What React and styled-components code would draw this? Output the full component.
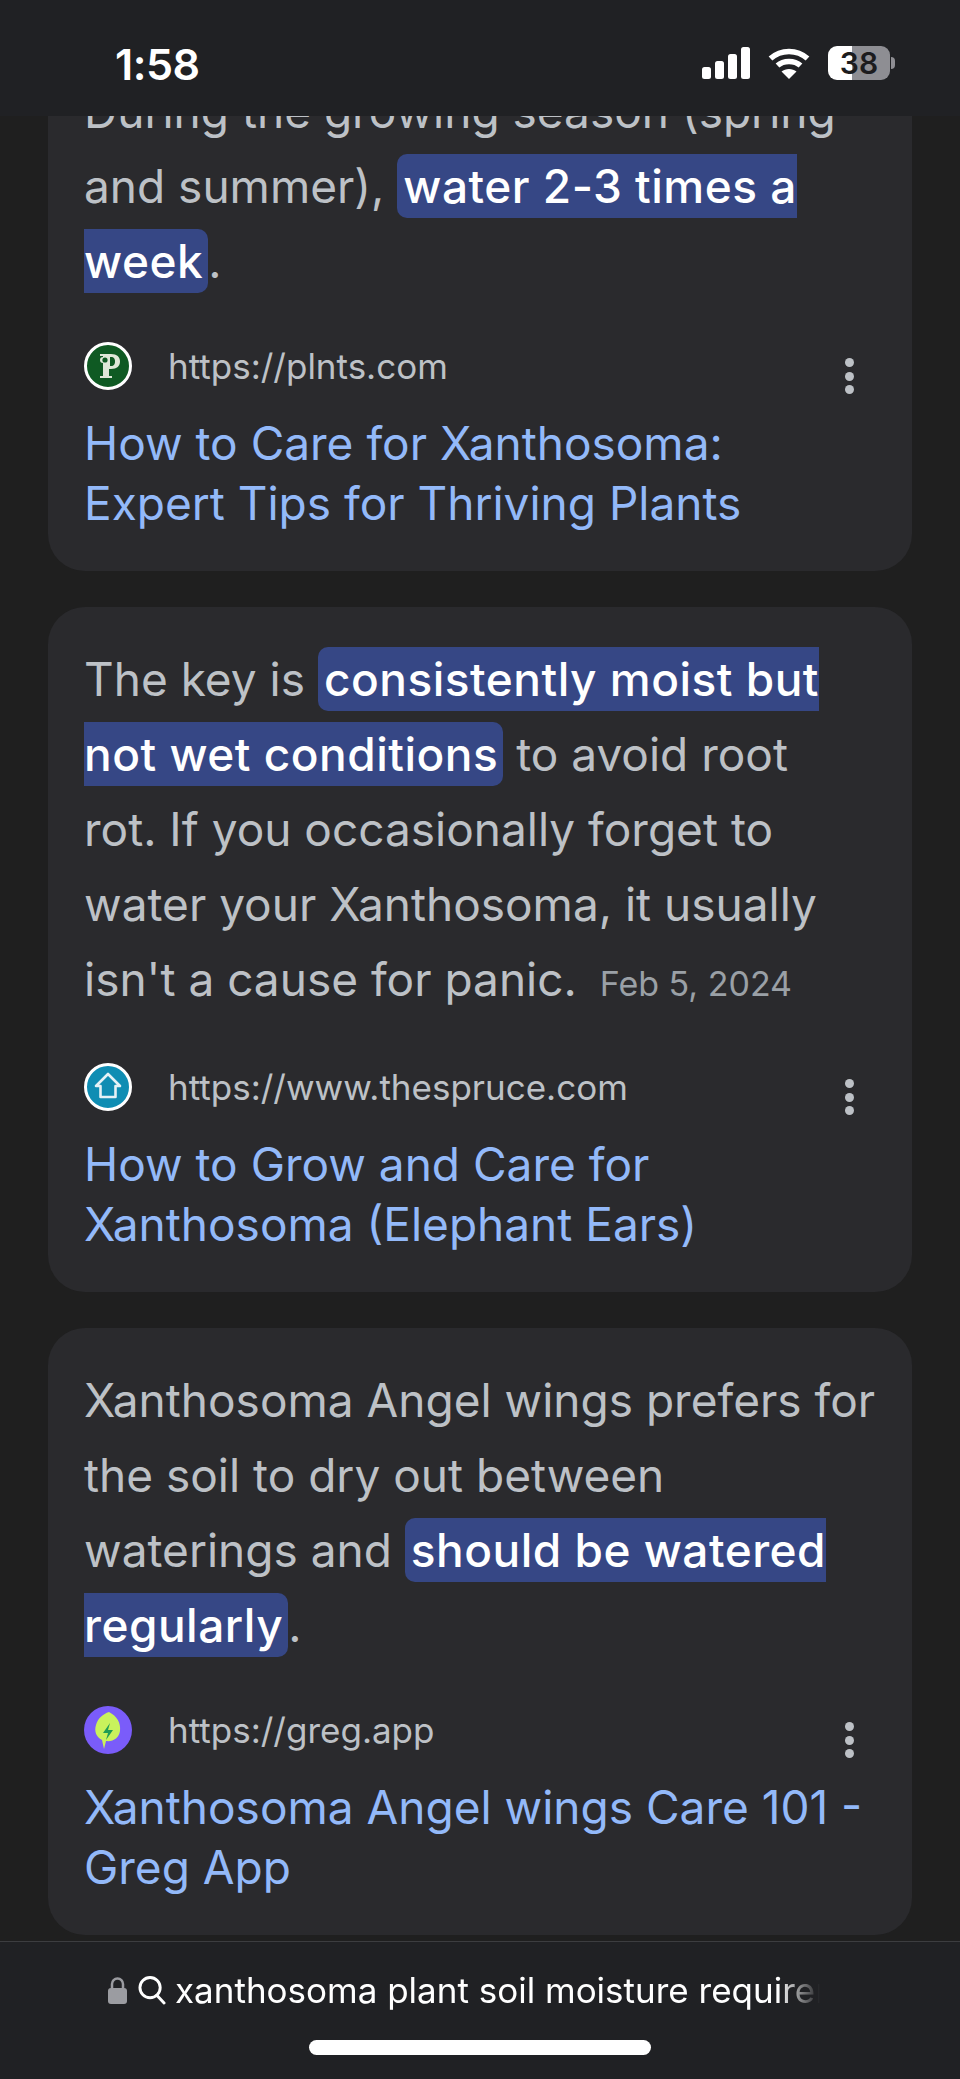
import React from "react";
import styled, { createGlobalStyle } from "styled-components";

const GlobalStyle = createGlobalStyle`
  html, body {
    margin: 0;
    padding: 0;
    background: #1f1f1f;
  }
`;

const Screen = styled.div`
  width: 960px;
  height: 2079px;
  display: flex;
  flex-direction: column;
  overflow: hidden;
  background: #1f1f1f;
  font-family: Inter, "Liberation Sans", sans-serif;
`;

const StatusBar = styled.div`
  height: 116px;
  flex-shrink: 0;
  background: #202124;
  display: flex;
  justify-content: space-between;
  align-items: flex-start;
  padding: 46px 65px 0 115px;
  box-sizing: border-box;
`;

const Time = styled.div`
  color: #fff;
  font-size: 43px;
  font-weight: 600;
  line-height: 36px;
  letter-spacing: -0.5px;
`;

const StatusIcons = styled.div`
  display: flex;
  align-items: center;
  gap: 18px;
`;

const Battery = styled.div`
  position: relative;
  width: 62px;
  height: 34px;
  margin-right: 5px;
  border-radius: 9px;
  background: linear-gradient(90deg, #fff 0 24px, #8e8e93 24px);
  color: #1c1c1e;
  font-size: 30px;
  font-weight: 600;
  line-height: 34px;
  text-align: center;
  &::after {
    content: "";
    position: absolute;
    right: -5px;
    top: 11px;
    width: 4px;
    height: 12px;
    border-radius: 0 4px 4px 0;
    background: #8e8e93;
  }
`;

const Feed = styled.div`
  flex: 1;
  min-height: 0;
  overflow: hidden;
  display: flex;
  flex-direction: column;
  justify-content: flex-end;
  gap: 36px;
  padding: 0 48px 6px;
`;

const Card = styled.div`
  flex-shrink: 0;
  background: #2a2a2d;
  border-radius: 37px;
  padding: 35px 36px 38px;
`;

const Snippet = styled.div`
  color: #bdc1c6;
  font-size: 46px;
  line-height: 75px;
  white-space: nowrap;
`;

const Mark = styled.span`
  background: #364785;
  color: #fff;
  font-weight: 500;
  letter-spacing: 0.5px;
  padding: 4px 5px 4px 6px;
  border-radius: 10px;
`;

const DateText = styled.span`
  color: #9aa0a6;
  font-size: 34px;
  line-height: 73px;
  margin-left: 10px;
`;

const Source = styled.div`
  display: flex;
  align-items: center;
  margin-top: 43px;
  height: 48px;
`;

const Favicon = styled.div`
  width: 48px;
  height: 48px;
  flex-shrink: 0;
  margin-right: 36px;
  svg {
    display: block;
  }
`;

const Url = styled.div`
  flex: 1;
  color: #bdc1c6;
  font-size: 35px;
`;

const Dots = styled.div`
  display: flex;
  flex-direction: column;
  gap: 4.5px;
  margin: 20px 22px 0 0;
  i {
    display: block;
    width: 9px;
    height: 9px;
    border-radius: 50%;
    background: #bdc1c6;
  }
`;

const Title = styled.div`
  margin-top: 23px;
  color: #93b9f9;
  font-size: 46px;
  line-height: 60px;
  white-space: nowrap;
`;

const BottomBar = styled.div`
  height: 138px;
  flex-shrink: 0;
  box-sizing: border-box;
  background: #202124;
  border-top: 1px solid #3c3d40;
  display: flex;
  flex-direction: column;
  align-items: flex-start;
`;

const Address = styled.div`
  width: 712px;
  height: 62px;
  margin: 17px 0 0 108px;
  display: flex;
  align-items: center;
  gap: 11px;
  color: #fff;
  font-size: 35px;
  white-space: nowrap;
  overflow: hidden;
  mask-image: linear-gradient(90deg, #000 670px, transparent 712px);
  svg {
    flex-shrink: 0;
  }
`;

const Query = styled.span`
  margin-left: -2px;
`;

const HomeBar = styled.div`
  width: 342px;
  height: 15px;
  margin: 19px 0 0 309px;
  border-radius: 8px;
  background: #fff;
`;

const SignalIcon = () => (
  <svg width="48" height="32" viewBox="0 0 48 32" fill="#fff">
    <rect x="0" y="20" width="9" height="12" rx="2.5" />
    <rect x="13" y="14" width="9" height="18" rx="2.5" />
    <rect x="26" y="7" width="9" height="25" rx="2.5" />
    <rect x="39" y="0" width="9" height="32" rx="2.5" />
  </svg>
);

const WifiIcon = () => (
  <svg width="42" height="32" viewBox="0 0 42 32" fill="none" stroke="#fff" strokeWidth="5.5">
    <path d="M2.5 11.5C13 2 29 2 39.5 11.5" />
    <path d="M9.5 18.5C15.5 13 26.5 13 32.5 18.5" />
    <path d="M21 32 13.5 24.5C17.5 21 24.5 21 28.5 24.5Z" fill="#fff" stroke="none" />
  </svg>
);

const PlntsIcon = () => (
  <svg width="48" height="48" viewBox="0 0 48 48">
    <circle cx="24" cy="24" r="22.5" fill="#0f5a23" stroke="#fff" strokeWidth="3" />
    <path d="M16 12h11c6 0 9 3 9 7.5S33 27 27 27h-2v7h3v2H16v-2h3V21c-2 0-3-1-3-3s1-3 3-3v-1h-3Z" fill="#dfe8d8" />
    <circle cx="21" cy="18" r="2.6" fill="#0f5a23" />
    <path d="M26 15h1c3 0 4 2 4 4.500s-1 4.500-4 4.500h-1Z" fill="#0f5a23" />
  </svg>
);

const SpruceIcon = () => (
  <svg width="48" height="48" viewBox="0 0 48 48">
    <circle cx="24" cy="24" r="22.500" fill="#0f8db3" stroke="#fff" strokeWidth="3" />
    <path d="M24 11 36 23h-4.500v11h-15V23H12Z" fill="#0f8db3" stroke="#e4f2f6" strokeWidth="2.600" strokeLinejoin="round" />
  </svg>
);

const GregIcon = () => (
  <svg width="48" height="48" viewBox="0 0 48 48">
    <circle cx="24" cy="24" r="24" fill="#7a5cfa" />
    <path d="M25 6C33 10 37 17 36 25 35 32 29 36 22 35L20 43 18 34C12 31 10 25 12 19 14 12 19 8 25 6Z" fill="#c9f25c" />
    <path d="M26 17 19 27h5l-2 7 7-10h-5Z" fill="#1f9d55" />
  </svg>
);

const LockIcon = () => (
  <svg width="19" height="28" viewBox="0 0 19 28">
    <path d="M4 13V8a5.500 5.500 0 0 1 11 0v5" fill="none" stroke="#9b9ca1" strokeWidth="2.500" />
    <rect x="0" y="12" width="19" height="16" rx="3" fill="#9b9ca1" />
  </svg>
);

const SearchIcon = () => (
  <svg width="28" height="30" viewBox="0 0 29 30" fill="none" stroke="#fff" strokeWidth="3">
    <circle cx="12.500" cy="12.500" r="10.500" />
    <path d="M19.500 20.500 27 28.500" strokeLinecap="round" />
  </svg>
);

const ResultCard = ({ icon, url, title, children }) => (
  <Card>
    <Snippet>{children}</Snippet>
    <Source>
      <Favicon>{icon}</Favicon>
      <Url>{url}</Url>
      <Dots>
        <i />
        <i />
        <i />
      </Dots>
    </Source>
    <Title>
      {title[0]}
      <br />
      {title[1]}
    </Title>
  </Card>
);

export default function App() {
  return (
    <Screen>
      <GlobalStyle />
      <StatusBar>
        <Time>1:58</Time>
        <StatusIcons>
          <SignalIcon />
          <WifiIcon />
          <Battery>38</Battery>
        </StatusIcons>
      </StatusBar>
      <Feed>
        <ResultCard
          icon={<PlntsIcon />}
          url="https://plnts.com"
          title={["How to Care for Xanthosoma:", "Expert Tips for Thriving Plants"]}
        >
          During the growing season (spring
          <br />
          and summer), <Mark>water 2-3 times a<br />week</Mark>.
        </ResultCard>
        <ResultCard
          icon={<SpruceIcon />}
          url="https://www.thespruce.com"
          title={["How to Grow and Care for", "Xanthosoma (Elephant Ears)"]}
        >
          The key is <Mark>consistently moist but<br />not wet conditions</Mark> to avoid root
          <br />
          rot. If you occasionally forget to
          <br />
          water your Xanthosoma, it usually
          <br />
          isn't a cause for panic. <DateText>Feb 5, 2024</DateText>
        </ResultCard>
        <ResultCard
          icon={<GregIcon />}
          url="https://greg.app"
          title={["Xanthosoma Angel wings Care 101 -", "Greg App"]}
        >
          Xanthosoma Angel wings prefers for
          <br />
          the soil to dry out between
          <br />
          waterings and <Mark>should be watered<br />regularly</Mark>.
        </ResultCard>
      </Feed>
      <BottomBar>
        <Address>
          <LockIcon />
          <SearchIcon />
          <Query>xanthosoma plant soil moisture requirements</Query>
        </Address>
        <HomeBar />
      </BottomBar>
    </Screen>
  );
}
